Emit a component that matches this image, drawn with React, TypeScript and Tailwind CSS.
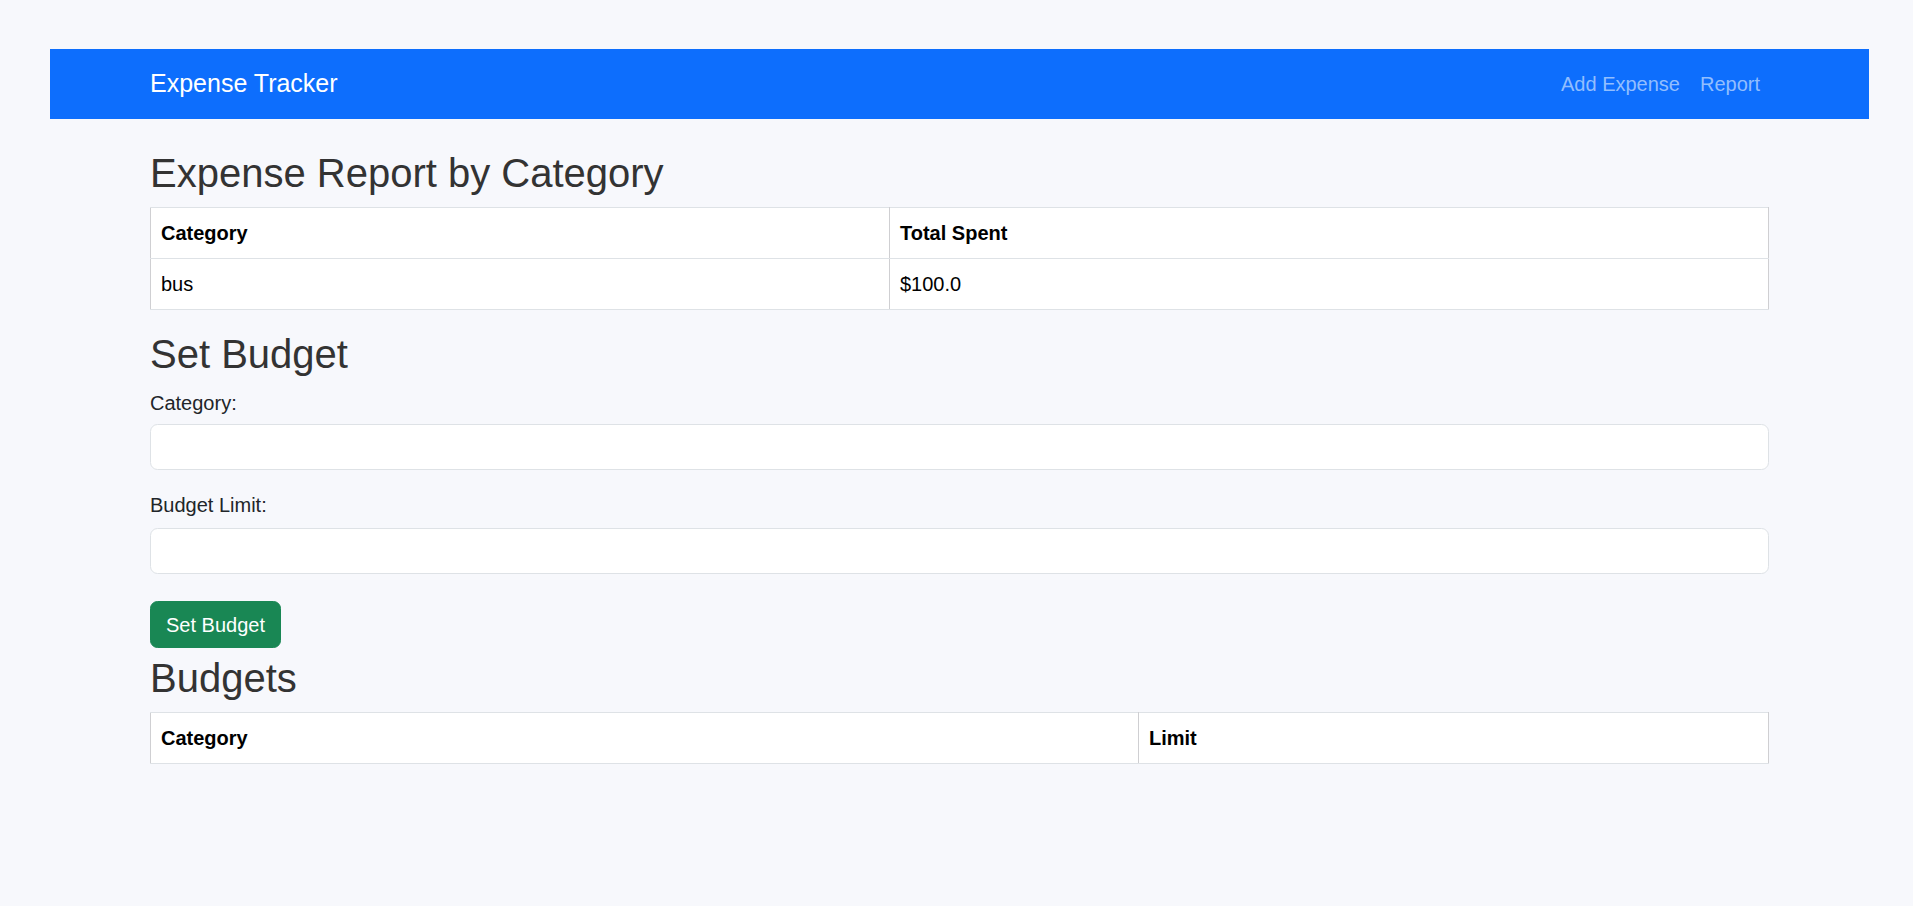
import React from "react";

const th = "border-y border-x border-y-[#dee2e6] border-x-[#cfcfd2] p-[10px] text-left font-bold";
const td = "border-y border-x border-y-[#dee2e6] border-x-[#cfcfd2] p-[10px]";

export default function App() {
  return (
    <div
      className="min-h-screen bg-[#f7f8fc] pt-[49px] pl-[50px] text-[#333]"
      style={{ fontFamily: '"Liberation Sans", Arial, sans-serif' }}
    >
      <nav className="h-[70px] w-[1819px] bg-[#0d6efd] flex items-center">
        <div className="ml-[100px] w-[1620px] flex items-center justify-between">
          <a className="text-[25px] leading-[37.5px] text-white">Expense Tracker</a>
          <div className="flex text-[20px] leading-[30px] text-[#92befe]">
            <a className="px-[10px]">Add Expense</a>
            <a className="px-[10px]">Report</a>
          </div>
        </div>
      </nav>

      <main className="ml-[100px] w-[1620px] pt-[30px]">
        <h2 className="text-[40px] leading-[48px] font-normal mb-[10px]">Expense Report by Category</h2>
        <table className="w-[1619px] table-fixed border-collapse bg-white text-[20px] leading-[30px] text-black mb-[20px]">
          <colgroup>
            <col className="w-[739px]" />
            <col />
          </colgroup>
          <thead>
            <tr>
              <th className={th}>Category</th>
              <th className={th}>Total Spent</th>
            </tr>
          </thead>
          <tbody>
            <tr>
              <td className={td}>bus</td>
              <td className={td}>$100.0</td>
            </tr>
          </tbody>
        </table>

        <h2 className="text-[40px] leading-[48px] font-normal mb-[10px]">Set Budget</h2>
        <form className="flex flex-col w-[1619px]">
          <label className="block text-[20px] leading-[30px] text-[#212529]">Category:</label>
          <input
            type="text"
            className="mt-[6px] h-[46px] w-full rounded-[7.5px] border border-[#dee2e6] bg-white px-[15px] text-[20px] outline-none"
          />
          <label className="block mt-[20px] text-[20px] leading-[30px] text-[#212529]">Budget Limit:</label>
          <input
            type="number"
            className="mt-[8px] h-[46px] w-full rounded-[7.5px] border border-[#dee2e6] bg-white px-[15px] text-[20px] outline-none"
          />
          <div className="mt-[27px]">
            <button
              type="button"
              className="h-[47px] w-[131px] rounded-[7.5px] bg-[#198754] text-white text-[20px] leading-[30px] border border-[#198754]"
            >
              Set Budget
            </button>
          </div>
        </form>

        <h2 className="mt-[6px] text-[40px] leading-[48px] font-normal mb-[10px]">Budgets</h2>
        <table className="w-[1619px] table-fixed border-collapse bg-white text-[20px] leading-[30px] text-black">
          <colgroup>
            <col className="w-[988px]" />
            <col />
          </colgroup>
          <thead>
            <tr>
              <th className={th}>Category</th>
              <th className={th}>Limit</th>
            </tr>
          </thead>
          <tbody></tbody>
        </table>
      </main>
    </div>
  );
}
